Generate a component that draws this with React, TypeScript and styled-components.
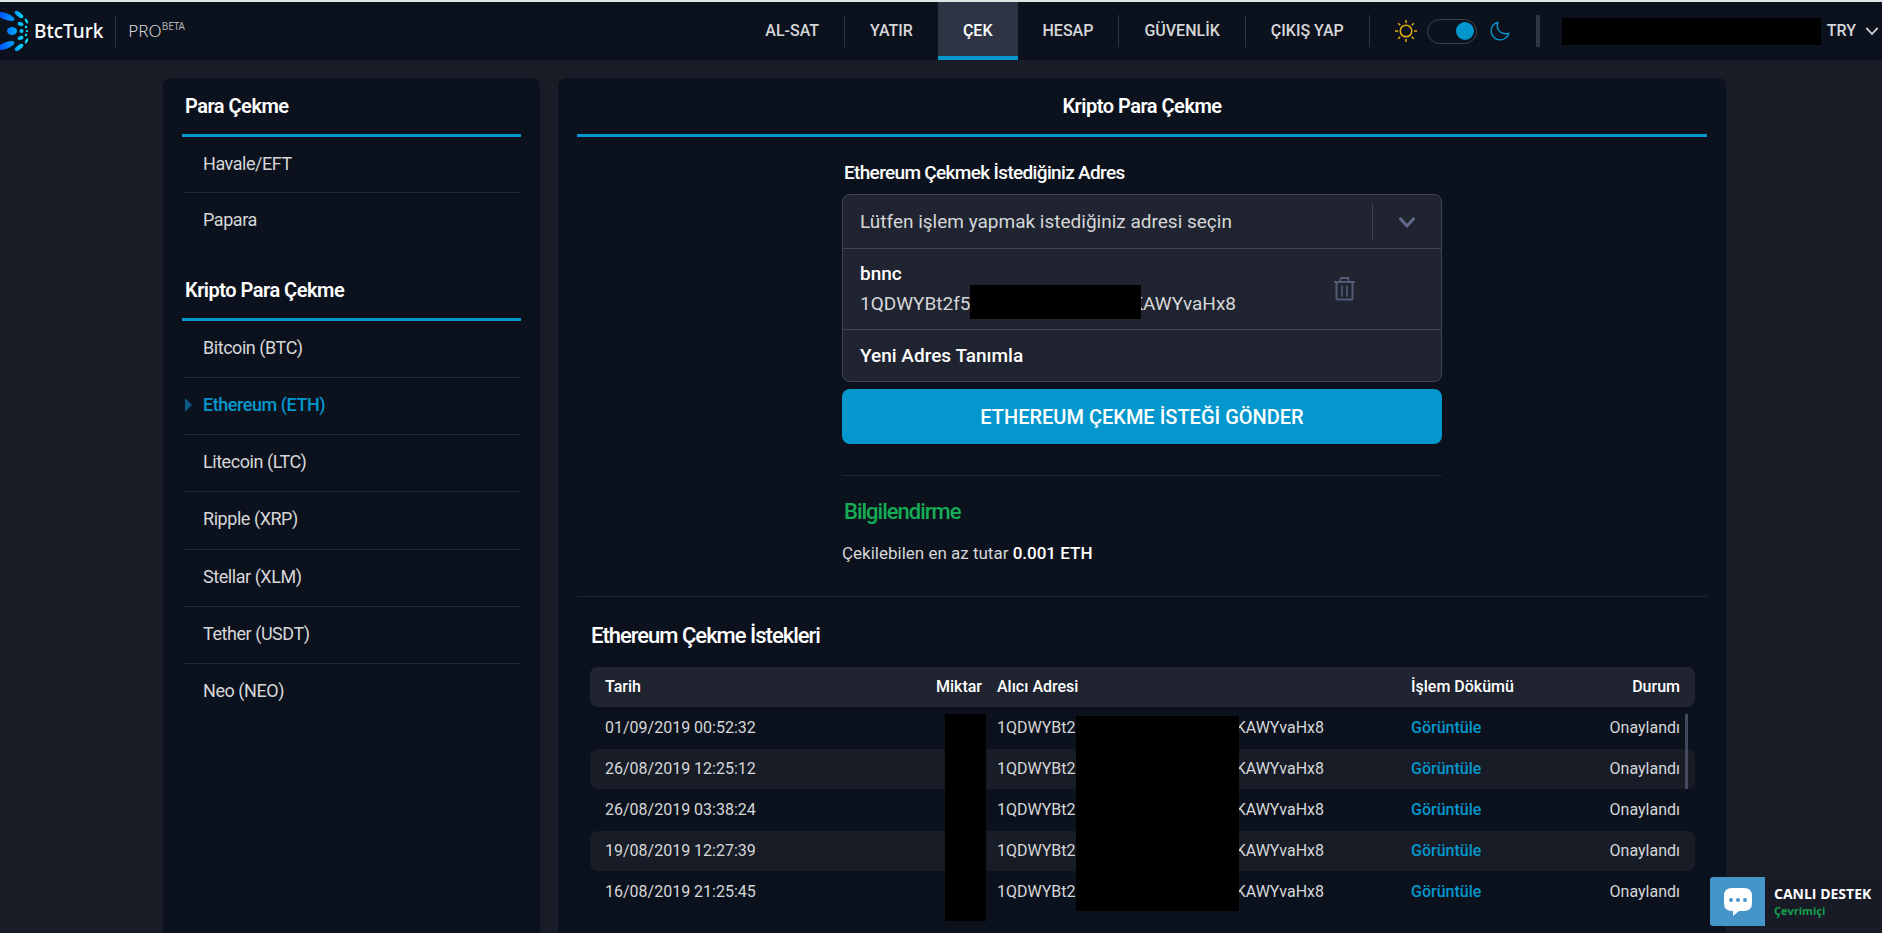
import React, { useState } from "react";
import styled, { createGlobalStyle, css } from "styled-components";

const c = {
  page: "#171c27",
  card: "#0c121d",
  field: "#1f2430",
  line: "#3e4458",
  faint: "#1f2530",
  accent: "#0397cd",
  text: "#d6d7d9",
  green: "#14ad55",
};

const GlobalStyle = createGlobalStyle`
  *, *::before, *::after { box-sizing: border-box; }
  html, body { height: 100%; }
  body {
    margin: 0;
    background: ${c.page};
    color: ${c.text};
    font-family: Roboto, "Liberation Sans", sans-serif;
    font-size: 17px;
    line-height: 24px;
    overflow: hidden;
  }
  #root { height: 100%; }
  button, input { font: inherit; color: inherit; }
`;

const Page = styled.div`
  display: flex;
  flex-direction: column;
  height: 100%;
  border-top: 2px solid #dfe6e6;
  overflow: hidden;
`;

const Header = styled.header`
  display: flex;
  flex: none;
  align-items: center;
  height: 58px;
  background: ${c.card};
`;

const Brand = styled.a`
  display: flex;
  align-items: center;
  color: #fff;
  text-decoration: none;
  font-family: "Noto Sans", sans-serif;
`;

const BrandName = styled.span`
  padding: 0 12px 0 6px;
  font-size: 19px;
  font-weight: 500;
`;

const BrandPro = styled.span`
  display: flex;
  padding-left: 12px;
  color: ${c.text};
  font-size: 17px;
  font-weight: 300;
`;

const Beta = styled.sup`
  font-size: 10px;
  font-weight: 400;
  line-height: 14px;
  opacity: 0.8;
`;

const Divider = styled.span<{ $thick?: boolean }>`
  flex: none;
  width: ${(p) => (p.$thick ? 4 : 1)}px;
  height: 32px;
  background: #2f3445;
`;

const Nav = styled.nav`
  display: flex;
  align-items: center;
  height: 100%;
  margin-left: auto;
`;

const NavLink = styled.a<{ $active?: boolean }>`
  display: flex;
  align-items: center;
  height: 100%;
  padding: 4px 25px 0;
  border-bottom: 4px solid transparent;
  color: ${c.text};
  font-size: 16px;
  font-weight: 500;
  text-decoration: none;
  white-space: nowrap;
  ${(p) =>
    p.$active &&
    css`
      background: #2f3445;
      border-color: ${c.accent};
      color: #fff;
    `}
`;

const Theme = styled.label`
  display: flex;
  align-items: center;
  gap: 10px;
  padding: 0 26px 0 25px;
`;

const Switch = styled.input`
  appearance: none;
  display: flex;
  align-items: center;
  width: 50px;
  height: 25px;
  margin: 0 3px 0 0;
  padding: 0 2px;
  border: 1px solid #3b4052;
  border-radius: 13px;
  &::before {
    content: "";
    width: 18px;
    height: 18px;
    border-radius: 50%;
    background: ${c.accent};
  }
  &:checked::before { margin-left: auto; }
`;

const Account = styled.button`
  display: flex;
  align-items: center;
  gap: 6px;
  padding: 0 3px 0 22px;
  border: 0;
  background: none;
  font-size: 16px;
  font-weight: 500;
`;

const Masked = styled.span`
  width: 259px;
  height: 27px;
  background: #000;
`;

const Currency = styled.span`
  padding-right: 3px;
`;

const Body = styled.main`
  display: grid;
  flex: 1;
  grid-template-columns: 377fr 1168fr;
  gap: 18px;
  padding: 18px 156px 0 163px;
`;

const Card = styled.section`
  min-width: 0;
  padding: 0 19px;
  border-radius: 8px 8px 0 0;
  background: ${c.card};
`;

const CardTitle = styled.h2<{ $center?: boolean }>`
  margin: 0;
  padding: 16px 3px 16px;
  border-bottom: 3px solid ${c.accent};
  color: #fff;
  font-size: 20px;
  font-weight: 600;
  letter-spacing: -0.025em;
  text-align: ${(p) => (p.$center ? "center" : "left")};
`;

const Menu = styled.ul<{ $rows: number }>`
  display: grid;
  grid-auto-rows: 1fr;
  min-height: ${(p) => (p.$rows > 2 ? 400 : 112)}px;
  margin: 0 1px 13px 3px;
  padding: 0;
  list-style: none;
`;

const MenuItem = styled.li`
  display: flex;
  border-bottom: 1px dotted #3b404c;
  &:last-child { border-bottom-color: transparent; }
`;

const MenuLink = styled.a<{ $active?: boolean }>`
  display: flex;
  flex: 1;
  align-items: center;
  gap: 11px;
  padding: 0 0 2px ${(p) => (p.$active ? 0 : 18)}px;
  color: ${(p) => (p.$active ? c.accent : c.text)};
  font-size: 18px;
  font-weight: ${(p) => (p.$active ? 500 : 400)};
  letter-spacing: -0.025em;
  text-decoration: none;
  ${(p) =>
    p.$active &&
    css`
      &::before {
        content: "";
        border: solid transparent;
        border-width: 7px 0 7px 7px;
        border-left-color: #0b5885;
      }
    `}
`;

const Form = styled.form`
  width: 600px;
  max-width: 100%;
  margin: 0 auto;
  padding-top: 24px;
`;

const Label = styled.div`
  padding: 0 2px 9px;
  color: #fff;
  font-size: 19px;
  font-weight: 500;
  letter-spacing: -0.035em;
`;

const Picker = styled.div`
  margin-bottom: 7px;
  border: 1px solid ${c.line};
  border-radius: 8px;
  background: ${c.field};
  font-size: 19px;
`;

const PickerHead = styled.button`
  display: flex;
  align-items: center;
  width: 100%;
  height: 53px;
  padding: 0 25px 0 17px;
  border: 0;
  background: none;
  text-align: left;
`;

const PickerValue = styled.span`
  flex: 1;
`;

const PickerArrow = styled.span`
  display: flex;
  align-items: center;
  height: 35px;
  padding-left: 25px;
  border-left: 1px solid ${c.line};
`;

const Option = styled.div`
  display: flex;
  align-items: center;
  justify-content: space-between;
  padding: 10px 86px 10px 17px;
  border-top: 1px solid ${c.line};
`;

const OptionName = styled.div`
  color: #fff;
  font-weight: 500;
  line-height: 30px;
`;

const OptionAddress = styled.div`
  position: relative;
  display: flex;
  justify-content: space-between;
  width: 376px;
  line-height: 30px;
`;

const OptionMask = styled.span`
  position: absolute;
  top: -4px;
  left: 110px;
  width: 171px;
  height: 34px;
  background: #000;
`;

const IconButton = styled.button`
  display: flex;
  padding: 0;
  border: 0;
  background: none;
`;

const NewAddress = styled.button`
  display: block;
  width: 100%;
  height: 52px;
  padding: 0 17px;
  border: 0;
  border-top: 1px solid ${c.line};
  background: none;
  color: #fff;
  font-weight: 500;
  text-align: left;
`;

const Submit = styled.button`
  width: 100%;
  height: 55px;
  border: 0;
  border-radius: 8px;
  background: ${c.accent};
  color: #fff;
  font-size: 20px;
  font-weight: 500;
`;

const Info = styled.div`
  margin-top: 31px;
  padding: 24px 0 31px;
  border-top: 1px solid ${c.faint};
`;

const InfoTitle = styled.h3`
  margin: 0 0 17px 2px;
  color: ${c.green};
  font-size: 22px;
  font-weight: 500;
  letter-spacing: -1px;
`;

const InfoText = styled.p`
  margin: 0;
`;

const Strong = styled.b`
  color: #fff;
  font-weight: 500;
`;

const History = styled.div`
  padding: 27px 12px 0 13px;
  border-top: 1px solid ${c.faint};
`;

const HistoryTitle = styled.h3`
  margin: 0 0 19px 1px;
  color: #fff;
  font-size: 22px;
  font-weight: 500;
  letter-spacing: -1px;
`;

const TableWrap = styled.div`
  position: relative;
`;

const Table = styled.table`
  width: 100%;
  border-spacing: 0 1px;
  table-layout: fixed;
  margin-top: -1px;
  font-size: 16px;
`;

const Th = styled.th<{ $right?: boolean; $flush?: boolean }>`
  height: 40px;
  padding: 0 ${(p) => (p.$flush ? 0 : 15)}px 0 15px;
  background: ${c.field};
  color: #fff;
  font-weight: 500;
  text-align: ${(p) => (p.$right ? "right" : "left")};
  &:first-child { border-radius: 8px 0 0 8px; }
  &:last-child { border-radius: 0 8px 8px 0; }
`;

const Td = styled.td<{ $right?: boolean }>`
  height: 40px;
  padding: 0 15px;
  text-align: ${(p) => (p.$right ? "right" : "left")};
  tr:nth-child(even) > & { background: ${c.page}; }
  &:first-child { border-radius: 8px 0 0 8px; }
  &:last-child { border-radius: 0 8px 8px 0; }
`;

const AddressText = styled.span`
  display: flex;
  justify-content: space-between;
  width: 327px;
`;

const ViewLink = styled.a`
  color: ${c.accent};
  font-weight: 500;
  text-decoration: none;
`;

const Col = styled.col<{ $w?: number }>`
  width: ${(p) => (p.$w ? `${p.$w}px` : "auto")};
`;

const TableMask = styled.span<{ $right: number; $top: number; $w: number; $h: number }>`
  position: absolute;
  top: ${(p) => p.$top}px;
  right: ${(p) => p.$right}px;
  width: ${(p) => p.$w}px;
  height: ${(p) => p.$h}px;
  background: #000;
`;

const ScrollThumb = styled.span`
  position: absolute;
  top: 48px;
  right: 7px;
  width: 3px;
  height: 75px;
  background: #44485c;
`;

const Chat = styled.button`
  position: fixed;
  right: 0;
  bottom: 7px;
  display: flex;
  align-items: center;
  width: 172px;
  height: 49px;
  padding: 0;
  border: 0;
  border-radius: 3px 0 0 3px;
  overflow: hidden;
  background: #181a26;
  color: #fff;
  font-family: "Open Sans", sans-serif;
  font-weight: 700;
  text-align: left;
`;

const ChatIcon = styled.span`
  display: flex;
  align-items: center;
  justify-content: center;
  width: 55px;
  height: 100%;
  background: #4595c9;
`;

const ChatText = styled.span`
  display: flex;
  flex-direction: column;
  padding-left: 9px;
  font-size: 14px;
  line-height: 18px;
  white-space: nowrap;
`;

const ChatStatus = styled.span`
  color: #14a04c;
  font-size: 11px;
  line-height: 16px;
`;

const Logo = () => (
  <svg width="28" height="42" viewBox="0 0 28 42" aria-hidden="true">
    <defs>
      <linearGradient id="brand" gradientUnits="userSpaceOnUse" x1="0" y1="0" x2="28" y2="0">
        <stop offset="0" stopColor="#0055ff" />
        <stop offset="0.5" stopColor="#009bff" />
        <stop offset="1" stopColor="#00f0ff" />
      </linearGradient>
    </defs>
    <g fill="url(#brand)">
      <ellipse cx="6" cy="6.5" rx="9" ry="3.3" transform="rotate(22 6 6.5)" />
      <ellipse cx="6" cy="35.5" rx="9" ry="3.3" transform="rotate(-22 6 35.5)" />
      <ellipse cx="12" cy="21" rx="5" ry="4" />
      <ellipse cx="19" cy="4.500" rx="5" ry="2.200" transform="rotate(37 19 4.5)" />
      <ellipse cx="19" cy="37.500" rx="5" ry="2.200" transform="rotate(-37 19 37.5)" />
      <ellipse cx="20.500" cy="14" rx="3" ry="2" transform="rotate(22 20.5 14)" />
      <ellipse cx="20.500" cy="28" rx="3" ry="2" transform="rotate(-22 20.5 28)" />
      <circle cx="21.500" cy="21" r="2" />
      <ellipse cx="26.500" cy="11" rx="2.800" ry="1.200" transform="rotate(62 26.5 11)" />
      <ellipse cx="26.500" cy="31" rx="2.800" ry="1.200" transform="rotate(-62 26.5 31)" />
      <circle cx="26" cy="17" r="1.200" />
      <circle cx="26" cy="25" r="1.200" />
      <circle cx="27" cy="21" r="1.100" />
    </g>
  </svg>
);

const Sun = () => (
  <svg width="22" height="22" viewBox="0 0 22 22" fill="none" stroke="#e5ae0c" strokeWidth="1.500" aria-hidden="true">
    <circle cx="11" cy="11" r="5.800" />
    <path d="M11 0v3M11 19v3M0 11h3M19 11h3M3.200 3.200l2 2M16.800 16.800l2 2M3.200 18.800l2-2M16.800 5.200l2-2" />
  </svg>
);

const Moon = () => (
  <svg width="20" height="20" viewBox="0 0 20 20" fill="none" stroke={c.accent} strokeWidth="1.400" strokeLinejoin="round" aria-hidden="true">
    <path d="M7.800 1.200A9 9 0 1 0 18.800 12.200 Q13.500 13.800 10 10.800 Q6 7 7.800 1.200Z" />
  </svg>
);

const Chevron = ({ size, color, weight }: { size: number; color: string; weight: number }) => (
  <svg width={size} height={size} viewBox="0 0 16 16" fill="none" stroke={color} strokeWidth={weight} aria-hidden="true">
    <path d="M1.500 4.500L8 11.500L14.500 4.500" />
  </svg>
);

const Trash = () => (
  <svg width="21" height="24" viewBox="0 0 21 24" fill="none" stroke="#535b77" strokeWidth="2" aria-hidden="true">
    <path d="M0 5h21M6 4.500L7 1h7l1 3.500M2.500 5v16q0 1.500 1.500 1.500h13q1.500 0 1.500-1.500V5" />
    <path d="M8 8.500v11M13 8.500v11" strokeWidth="1.600" />
  </svg>
);

const Bubble = () => (
  <svg width="28" height="30" viewBox="0 0 28 30" aria-hidden="true">
    <path fill="#fff" d="M8 1h12q8 0 8 8v7q0 8-8 8h-5l-6 5v-5H8q-8 0-8-8V9Q0 1 8 1Z" />
    <g fill="#4595c9">
      <circle cx="7" cy="13" r="2" />
      <circle cx="14" cy="13" r="2" />
      <circle cx="21" cy="13" r="2" />
    </g>
  </svg>
);

const links = ["AL-SAT", "YATIR", "ÇEK", "HESAP", "GÜVENLİK", "ÇIKIŞ YAP"];
const fiat = ["Havale/EFT", "Papara"];
const coins = [
  "Bitcoin (BTC)",
  "Ethereum (ETH)",
  "Litecoin (LTC)",
  "Ripple (XRP)",
  "Stellar (XLM)",
  "Tether (USDT)",
  "Neo (NEO)",
];
const dates = [
  "01/09/2019 00:52:32",
  "26/08/2019 12:25:12",
  "26/08/2019 03:38:24",
  "19/08/2019 12:27:39",
  "16/08/2019 21:25:45",
];

const MenuList = ({ items, active }: { items: string[]; active?: string }) => (
  <Menu $rows={items.length}>
    {items.map((item) => (
      <MenuItem key={item}>
        <MenuLink href="#" $active={item === active}>{item}</MenuLink>
      </MenuItem>
    ))}
  </Menu>
);

export default function App() {
  const [dark, setDark] = useState(true);
  return (
    <>
      <GlobalStyle />
      <Page>
        <Header>
          <Brand href="#">
            <Logo />
            <BrandName>BtcTurk</BrandName>
            <Divider />
            <BrandPro>PRO<Beta>BETA</Beta></BrandPro>
          </Brand>
          <Nav>
            {links.map((link) => (
              <React.Fragment key={link}>
                <NavLink href="#" $active={link === "ÇEK"}>{link}</NavLink>
                {link !== "YATIR" && link !== "ÇEK" && <Divider />}
              </React.Fragment>
            ))}
          </Nav>
          <Theme>
            <Sun />
            <Switch type="checkbox" aria-label="Tema" checked={dark} onChange={() => setDark(!dark)} />
            <Moon />
          </Theme>
          <Divider $thick />
          <Account type="button">
            <Masked />
            <Currency>TRY</Currency>
            <Chevron size={14} color={c.text} weight={2} />
          </Account>
        </Header>
        <Body>
          <Card>
            <CardTitle>Para Çekme</CardTitle>
            <MenuList items={fiat} />
            <CardTitle>Kripto Para Çekme</CardTitle>
            <MenuList items={coins} active="Ethereum (ETH)" />
          </Card>
          <Card>
            <CardTitle $center>Kripto Para Çekme</CardTitle>
            <Form onSubmit={(e) => e.preventDefault()}>
              <Label id="address-label">Ethereum Çekmek İstediğiniz Adres</Label>
              <Picker>
                <PickerHead type="button" aria-expanded="true" aria-labelledby="address-label">
                  <PickerValue>Lütfen işlem yapmak istediğiniz adresi seçin</PickerValue>
                  <PickerArrow><Chevron size={18} color="#626b8d" weight={2.5} /></PickerArrow>
                </PickerHead>
                <Option>
                  <div>
                    <OptionName>bnnc</OptionName>
                    <OptionAddress>
                      <span>1QDWYBt2f5G</span>
                      <span>KAWYvaHx8</span>
                      <OptionMask />
                    </OptionAddress>
                  </div>
                  <IconButton type="button" aria-label="Sil"><Trash /></IconButton>
                </Option>
                <NewAddress type="button">Yeni Adres Tanımla</NewAddress>
              </Picker>
              <Submit type="submit">ETHEREUM ÇEKME İSTEĞİ GÖNDER</Submit>
              <Info>
                <InfoTitle>Bilgilendirme</InfoTitle>
                <InfoText>Çekilebilen en az tutar <Strong>0.001 ETH</Strong></InfoText>
              </Info>
            </Form>
            <History>
              <HistoryTitle>Ethereum Çekme İstekleri</HistoryTitle>
              <TableWrap>
                <Table>
                  <colgroup>
                    <Col />
                    <Col $w={100} />
                    <Col $w={414} />
                    <Col $w={170} />
                    <Col $w={129} />
                  </colgroup>
                  <thead>
                    <tr>
                      <Th>Tarih</Th>
                      <Th $right $flush>Miktar</Th>
                      <Th>Alıcı Adresi</Th>
                      <Th>İşlem Dökümü</Th>
                      <Th $right>Durum</Th>
                    </tr>
                  </thead>
                  <tbody>
                    {dates.map((date) => (
                      <tr key={date}>
                        <Td>{date}</Td>
                        <Td />
                        <Td><AddressText><span>1QDWYBt2</span><span>KAWYvaHx8</span></AddressText></Td>
                        <Td><ViewLink href="#">Görüntüle</ViewLink></Td>
                        <Td $right>Onaylandı</Td>
                      </tr>
                    ))}
                  </tbody>
                </Table>
                <TableMask $right={709} $top={48} $w={41} $h={207} />
                <TableMask $right={456} $top={50} $w={163} $h={195} />
                <ScrollThumb />
              </TableWrap>
            </History>
          </Card>
        </Body>
        <Chat type="button">
          <ChatIcon><Bubble /></ChatIcon>
          <ChatText>
            CANLI DESTEK
            <ChatStatus>Çevrimiçi</ChatStatus>
          </ChatText>
        </Chat>
      </Page>
    </>
  );
}
